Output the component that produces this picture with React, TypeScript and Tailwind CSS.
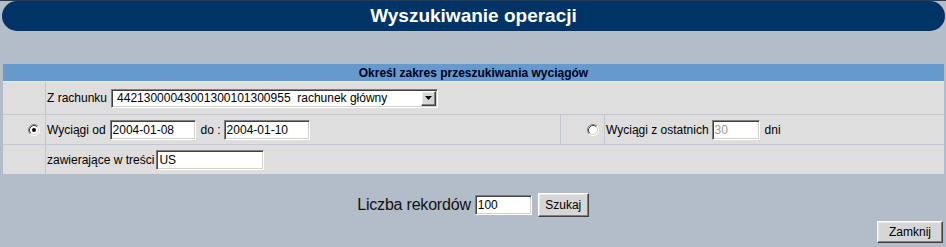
import React from "react";

const inset =
  "bg-white border border-t-[#808080] border-l-[#808080] border-b-white border-r-white shadow-[inset_1px_1px_0_#404040,inset_-1px_-1px_0_#d4d0c8] text-[12px] leading-none text-black pl-[2px] flex items-center";

const raised =
  "bg-[#d6d6d6] border border-t-white border-l-white border-b-[#404040] border-r-[#404040] shadow-[inset_-1px_-1px_0_#808080,inset_1px_1px_0_#e8e8e8] text-[12px] text-black flex items-center justify-center";

function Radio({ checked }: { checked?: boolean }) {
  return (
    <svg width="12" height="12" viewBox="0 0 12 12">
      <circle cx="6" cy="6" r="5" fill="#ffffff" />
      <path d="M9.89 2.11 A5.5 5.5 0 0 0 2.11 9.89" fill="none" stroke="#808080" strokeWidth="1" />
      <path d="M2.11 9.89 A5.5 5.5 0 0 0 9.89 2.11" fill="none" stroke="#ffffff" strokeWidth="1" />
      <path d="M9.18 2.82 A4.5 4.5 0 0 0 2.82 9.18" fill="none" stroke="#404040" strokeWidth="1" />
      <path d="M2.82 9.18 A4.5 4.5 0 0 0 9.18 2.82" fill="none" stroke="#d4d0c8" strokeWidth="1" />
      {checked && <circle cx="6" cy="6" r="2" fill="#000000" />}
    </svg>
  );
}

export default function App() {
  return (
    <div
      className="w-[946px] h-[247px] bg-[#b3bdc9] flex flex-col overflow-hidden text-black"
      style={{ fontFamily: '"Liberation Sans", Arial, sans-serif' }}
    >
      <div className="h-px bg-[#2c3a4a]" />
      <div className="ml-[2px] mr-px h-[30px] rounded-full bg-[#003366] flex items-center justify-center text-white font-bold text-[19px]">
        Wyszukiwanie operacji
      </div>

      <div className="mt-[33px] ml-[3px] mr-[2px] flex flex-col">
        <div className="h-[17px] bg-[#6699cc] flex items-center justify-center font-bold text-[12px] text-[#000022]">
          Określ zakres przeszukiwania wyciągów
        </div>
        <div className="h-px bg-[#e6ebf0]" />

        {/* row 1 */}
        <div className="h-[32px] flex bg-[#dedede]">
          <div className="w-[42px]" />
          <div className="w-px bg-[#c2c8cf]" />
          <div className="flex-1 flex items-center pl-px text-[12px]">
            <span>Z rachunku</span>
            <div className={`${inset} ml-[4px] w-[327px] h-[19px] relative`}>
              <span className="whitespace-pre pl-[3px]">44213000043001300101300955  rachunek główny</span>
              <div className={`${raised} absolute right-[1px] top-[1px] w-[15px] h-[15px]`}>
                <svg width="7" height="4" viewBox="0 0 7 4">
                  <path d="M0 0 H7 L3.5 4 Z" fill="#000" />
                </svg>
              </div>
            </div>
          </div>
        </div>
        <div className="h-px bg-[#c2c8cf]" />

        {/* row 2 */}
        <div className="h-[29px] flex bg-[#dedede] text-[12px]">
          <div className="w-[42px] flex items-center justify-end pr-[5px]">
            <Radio checked />
          </div>
          <div className="w-px bg-[#c2c8cf]" />
          <div className="w-[514px] flex items-center pl-px">
            <span>Wyciągi od</span>
            <div className={`${inset} ml-[4px] w-[86px] h-[20px]`}>2004-01-08</div>
            <span className="ml-[5px]">do :</span>
            <div className={`${inset} ml-[3px] w-[86px] h-[20px]`}>2004-01-10</div>
          </div>
          <div className="w-px bg-[#c2c8cf]" />
          <div className="w-[43px] flex items-center justify-end pr-[5px]">
            <Radio />
          </div>
          <div className="w-px bg-[#c2c8cf]" />
          <div className="flex-1 flex items-center pl-px">
            <span>Wyciągi z ostatnich</span>
            <div className={`${inset} ml-[3px] w-[48px] h-[20px] !text-[#9a9a9a]`}>30</div>
            <span className="ml-[5px]">dni</span>
          </div>
        </div>
        <div className="h-px bg-[#c2c8cf]" />

        {/* row 3 */}
        <div className="h-[29px] flex bg-[#dedede] text-[12px]">
          <div className="w-[42px]" />
          <div className="w-px bg-[#c2c8cf]" />
          <div className="flex-1 flex items-center pl-px">
            <span>zawierające w treści</span>
            <div className={`${inset} ml-[2px] w-[108px] h-[20px]`}>US</div>
          </div>
        </div>
      </div>

      <div className="mt-[19px] h-[24px] flex items-center justify-center">
        <span className="text-[16px] tracking-[-0.2px] text-[#111]">Liczba rekordów</span>
        <div className={`${inset} ml-[4px] w-[57px] h-[20px]`}>100</div>
        <div className={`${raised} ml-[6px] w-[51px] h-[24px]`}>Szukaj</div>
      </div>

      <div className="mt-[4px] flex justify-end pr-[3px]">
        <div className={`${raised} w-[66px] h-[22px]`}>Zamknij</div>
      </div>
    </div>
  );
}
